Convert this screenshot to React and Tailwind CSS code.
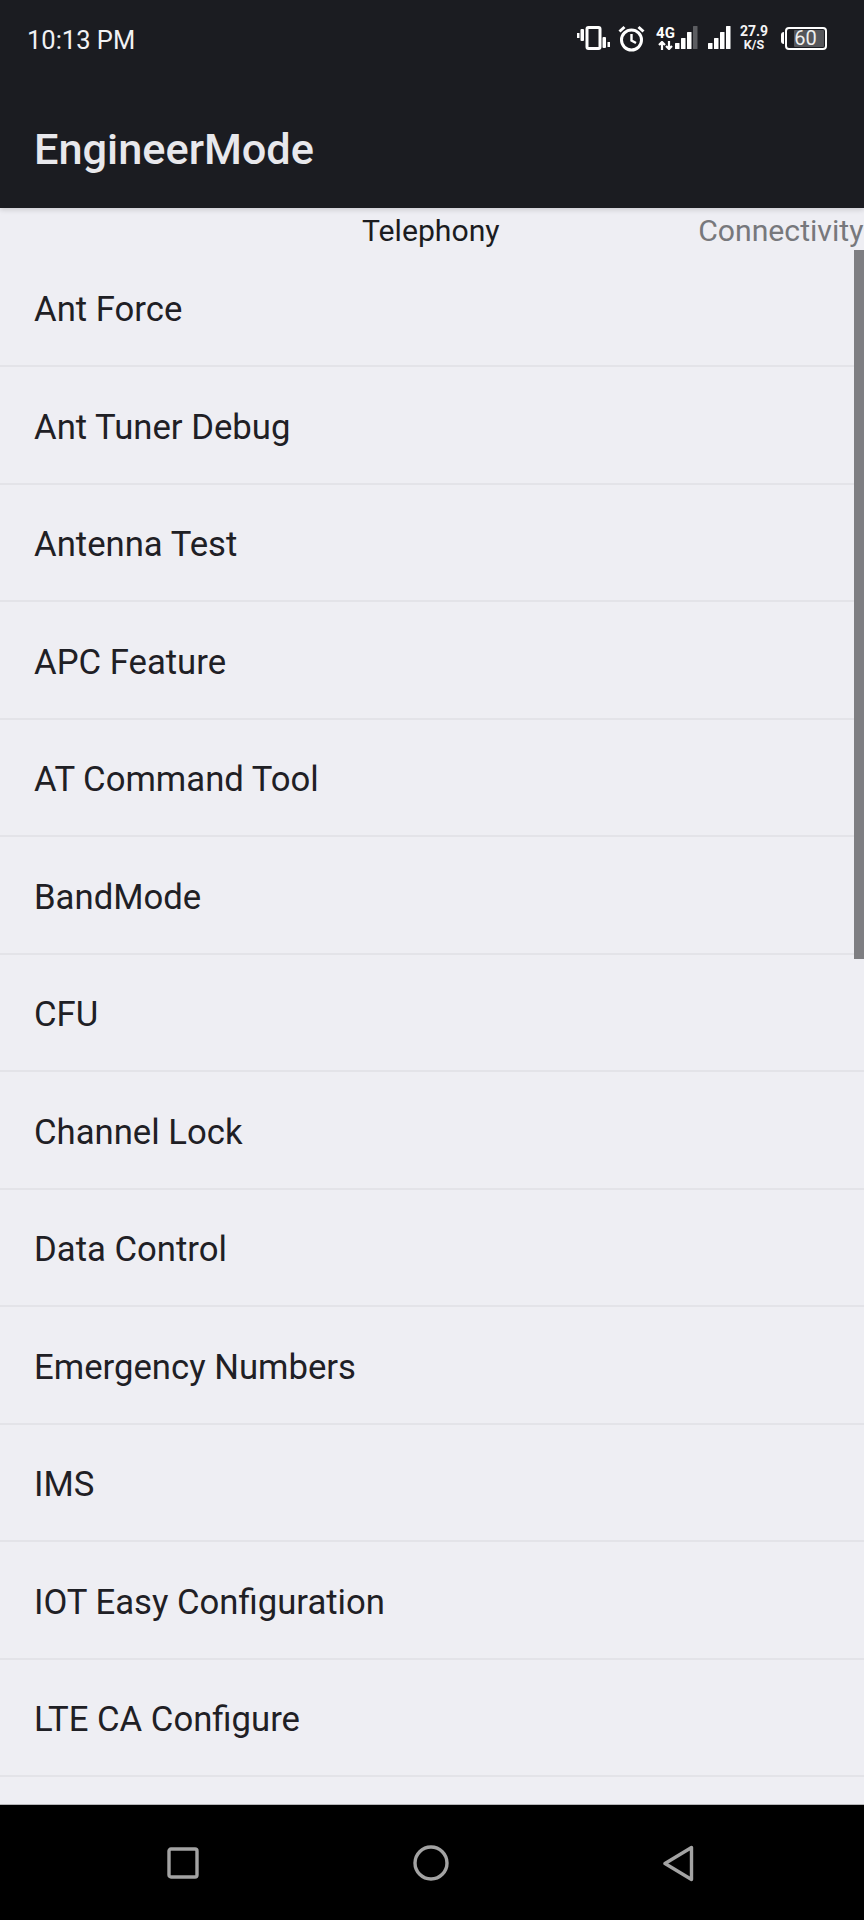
const items = [
  'Ant Force',
  'Ant Tuner Debug',
  'Antenna Test',
  'APC Feature',
  'AT Command Tool',
  'BandMode',
  'CFU',
  'Channel Lock',
  'Data Control',
  'Emergency Numbers',
  'IMS',
  'IOT Easy Configuration',
  'LTE CA Configure',
];

const VibrateIcon = () => (
  <svg width="33" height="24" viewBox="0 0 33 24" fill="none">
    <rect x="10" y="1.5" width="13" height="21" rx="1.5" stroke="white" strokeWidth="3" />
    <rect x="0" y="7" width="2.5" height="5" fill="white" />
    <rect x="3.5" y="3" width="3.5" height="12" rx="1" fill="white" />
    <rect x="25.5" y="11" width="3.5" height="11" rx="1" fill="white" />
    <rect x="30.5" y="16" width="2.5" height="5" fill="white" />
  </svg>
);

const AlarmIcon = () => (
  <svg width="27" height="27" viewBox="0 0 27 27" fill="none" stroke="white">
    <circle cx="13.5" cy="15" r="10" strokeWidth="3" />
    <path d="M13.5 9v6.5l4.5 2.5" strokeWidth="2.4" />
    <path d="M1.5 6.5L6.5 2M25.5 6.5L20.5 2" strokeWidth="3" />
  </svg>
);

const SignalBars = ({ dim }) => (
  <svg width="23" height="24" viewBox="0 0 23 24">
    <rect x="0" y="17" width="4.5" height="6" rx="0.5" fill="white" />
    <rect x="6" y="12" width="4.5" height="11" rx="0.5" fill="white" />
    <rect x="12" y="6" width="4.5" height="17" rx="0.5" fill="white" />
    <rect x="18" y="0" width="4.5" height="23" rx="0.5" fill={dim ? '#5c5d61' : 'white'} />
  </svg>
);

const StatusBar = () => (
  <div className="h-[78px] flex items-center justify-between pl-[27px] pr-[37px] pt-[2px]">
    <span className="mt-[2px] text-[25.5px] leading-none text-[#f1f1f3]">10:13 PM</span>
    <div className="mb-[4px] flex items-center">
      <VibrateIcon />
      <div className="ml-[8px]">
        <AlarmIcon />
      </div>
      <div className="ml-[11px] flex items-end">
        <div className="w-[19px] flex flex-col items-center font-bold text-white">
          <span className="text-[15px] leading-[15px]">4G</span>
          <svg width="16" height="9" viewBox="0 0 16 9" fill="none" stroke="white" strokeWidth="2.2">
            <path d="M4 9V1M1 4l3-3 3 3M11 0v8M8 5l3 3 3-3" />
          </svg>
        </div>
        <SignalBars dim />
      </div>
      <div className="ml-[10px]">
        <SignalBars />
      </div>
      <div className="ml-[8px] w-[30px] flex flex-col items-center font-bold text-[#f4f4f6]">
        <span className="text-[14px] leading-[13px]">27.9</span>
        <span className="text-[12.5px] leading-[13px]">K/S</span>
      </div>
      <div className="ml-[12px] flex items-center">
        <div className="w-[3px] h-[12px] bg-white rounded-l-sm" />
        <div className="ml-[1px] w-[42px] h-[23px] border-2 border-white rounded-[4px] p-[1px] flex justify-end">
          <div className="w-[30px] h-full bg-[#55565a] rounded-[1px]" />
        </div>
        <span className="ml-[-35px] w-[27px] text-center text-[20px] leading-none text-[#eeeeee] relative">60</span>
      </div>
      <div className="w-[8px]" />
    </div>
  </div>
);

const NavBar = () => (
  <div className="h-[116px] shrink-0 bg-black border-t border-t-[#b5b5b8] flex items-center pl-[167px] pr-[170px] justify-between pt-[1px]">
    <svg width="32" height="32" viewBox="0 0 32 32" fill="none" stroke="#a3a3a3" strokeWidth="3.4">
      <rect x="2" y="2" width="28" height="28" rx="2" />
    </svg>
    <svg width="36" height="36" viewBox="0 0 36 36" fill="none" stroke="#a3a3a3" strokeWidth="3.4">
      <circle cx="18" cy="18" r="16" />
    </svg>
    <svg width="31" height="37" viewBox="0 0 31 37" fill="none" stroke="#a3a3a3" strokeWidth="3.4" strokeLinejoin="round">
      <path d="M28.5 2.5V34.5L2 18.5Z" />
    </svg>
  </div>
);

export default function App() {
  return (
    <div className="relative w-[864px] h-[1920px] overflow-hidden flex flex-col bg-[#eeeef3] font-['Roboto',sans-serif]">
      {/* Header */}
      <div className="relative z-10 h-[208px] shrink-0 bg-[#1b1c21] shadow-[0_2px_5px_rgba(0,0,0,0.14)]">
        <StatusBar />
        <h1 className="pl-[34px] pt-[47px] text-[43.3px] leading-[50px] font-medium text-[#e8e8ec]">EngineerMode</h1>
      </div>

      {/* Tabs */}
      <div className="h-[41.5px] shrink-0 flex items-center justify-between pl-[362px] pr-[0.5px] pt-[5px] text-[30.2px] leading-none">
        <span className="text-[#1b1c21]">Telephony</span>
        <span className="text-[#77787c]">Connectivity</span>
      </div>

      {/* List */}
      <div className="flex-1 overflow-hidden">
        {items.map((item) => (
          <div
            key={item}
            className="h-[117.5px] flex items-center pl-[34px] pt-[5px] border-b-2 border-b-[#e3e3e8] text-[34.7px] leading-none text-[#1f2025]"
          >
            {item}
          </div>
        ))}
      </div>

      <NavBar />

      {/* Scrollbar */}
      <div className="absolute right-0 top-[250px] w-[10px] h-[709px] bg-[#7e7e82]" />
    </div>
  );
}
